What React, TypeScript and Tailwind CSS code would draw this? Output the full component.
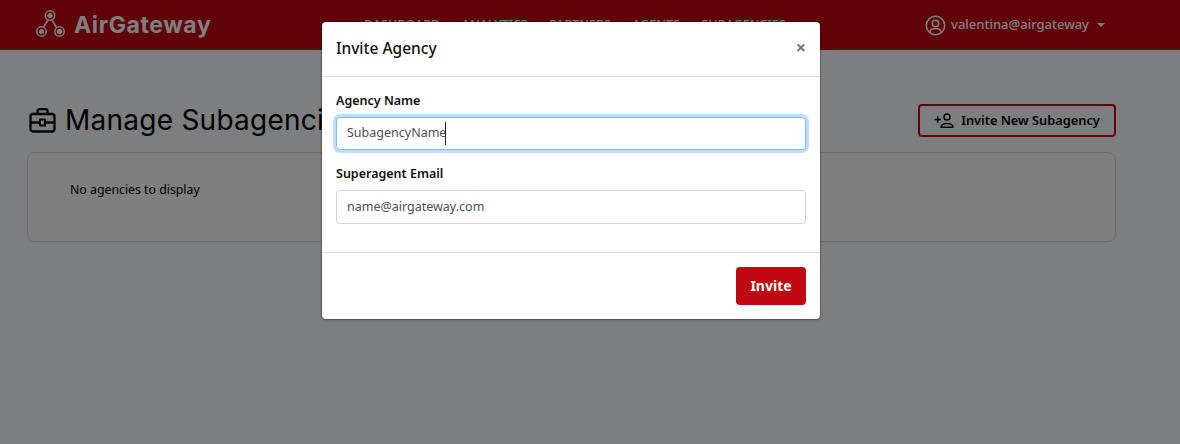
const navItems = ['DASHBOARD', 'ANALYTICS', 'PARTNERS', 'AGENTS', 'SUBAGENCIES'];

function LogoIcon() {
  return (
    <svg width="30" height="30" viewBox="0 0 30 30" fill="none" stroke="currentColor" strokeWidth="1.5">
      <circle cx="14" cy="5.500" r="4.700" />
      <circle cx="14" cy="5.500" r="2.500" fill="currentColor" stroke="none" />
      <circle cx="5.500" cy="21.500" r="4.700" />
      <circle cx="5.500" cy="21.500" r="2.500" fill="currentColor" stroke="none" />
      <circle cx="23.500" cy="21.500" r="4.700" />
      <circle cx="23.500" cy="21.500" r="2.800" fill="currentColor" stroke="none" />
      <path d="M12 10 L7.500 17.200 M16 10 L20.500 17.500" />
    </svg>
  );
}

function BriefcaseIcon() {
  return (
    <svg width="27" height="25" viewBox="0 0 27 25" fill="none" stroke="#0a0a0a" strokeWidth="2.300" strokeLinejoin="round">
      <rect x="1.500" y="6" width="24" height="17.500" rx="2.500" />
      <path d="M8.500 6V3.200a2 2 0 0 1 2-2h6a2 2 0 0 1 2 2V6" />
      <path d="M1.500 14.500h9M16.500 14.500h9" />
      <rect x="11" y="11.500" width="5" height="6" strokeWidth="2" />
    </svg>
  );
}

function InvitePersonIcon() {
  return (
    <svg width="20" height="16" viewBox="0 0 20 16" fill="none" stroke="#0a0a0a" strokeWidth="1.500">
      <path d="M0.500 6.500h6.500M3.750 3.200v6.600" />
      <circle cx="13" cy="4" r="3" />
      <path d="M7 14.200c0-2.400 3-3.700 6-3.700s6 1.300 6 3.700z" strokeLinejoin="round" />
    </svg>
  );
}

function UserCircleIcon() {
  return (
    <svg width="21" height="21" viewBox="0 0 21 21" fill="none" stroke="currentColor" strokeWidth="1.600">
      <circle cx="10.500" cy="10.500" r="9.200" />
      <circle cx="10.500" cy="8.500" r="3.200" />
      <path d="M4.500 17.200c0.800-2.500 3.200-3.700 6-3.700s5.200 1.200 6 3.700" />
    </svg>
  );
}

export default function App() {
  return (
    <div className="relative h-[444px] w-[1180px] overflow-hidden bg-[#fbfdff] font-['Noto_Sans',sans-serif]">
      <header className="flex h-[50px] items-center bg-[#c00813] pl-[36px] pr-[75px] text-white">
        <div className="flex w-[328px] items-center gap-[8px]">
          <LogoIcon />
          <span className="font-['Inter',sans-serif] text-[23px] font-bold tracking-[0.6px]">AirGateway</span>
        </div>
        <nav className="flex gap-[21.500px] text-[12.500px] font-medium">
          {navItems.map((item) => (
            <span key={item}>{item}</span>
          ))}
        </nav>
        <div className="ml-auto flex items-center gap-[5px] text-[13px] font-medium">
          <UserCircleIcon />
          <span>valentina@airgateway</span>
          <span className="ml-[3px] h-0 w-0 border-x-[4px] border-t-[4px] border-x-transparent border-t-white" />
        </div>
      </header>

      <main className="px-[27px] pt-[46px]">
        <div className="flex h-[48px] w-[1089px] items-center justify-between">
          <h1 className="ml-[2px] flex items-center gap-[9px] font-['Inter',sans-serif] text-[28px] leading-none tracking-[0.25px] text-black">
            <BriefcaseIcon />
            Manage Subagencies
          </h1>
          <button className="flex h-[33px] w-[198px] items-center justify-center gap-[7px] rounded-[4px] border-2 border-[#c00813] pt-[1px] text-[12.800px] font-semibold text-black">
            <InvitePersonIcon />
            Invite New Subagency
          </button>
        </div>
        <section className="mt-[8px] h-[90px] w-[1089px] rounded-[8px] border border-[#d8dce6] bg-white pl-[42px] pt-[28px] text-[12.300px] text-black shadow-[0_1px_4px_rgba(0,0,0,0.03)]">
          No agencies to display
        </section>
      </main>

      <div className="absolute inset-0 bg-[#000000]/50" />

      <div className="absolute left-[322px] top-[22px] w-[498px] rounded-[4px] bg-white shadow-[0_0_0_1px_rgba(0,0,0,0.2),0_1px_3px_rgba(0,0,0,0.2)]">
        <div className="flex h-[55px] items-center justify-between border-b border-[#dee2e6] pl-[14px] pr-[14px]">
          <h2 className="pb-[1px] text-[15.500px] font-medium text-[#111]">Invite Agency</h2>
          <span className="pb-[4px] text-[18px] font-bold leading-none text-[#777]">×</span>
        </div>
        <div className="h-[176px] border-b border-[#dee2e6] px-[14px] pt-[14px]">
          <label className="block text-[12.500px] leading-[20px] font-semibold text-[#111]">Agency Name</label>
          <div className="relative mt-[6px]">
            <input
              readOnly
              value="SubagencyName"
              className="block h-[33px] w-[470px] rounded-[4px] border border-[#80bdff] bg-white px-[10px] pb-[2px] text-[12.500px] text-[#495057] shadow-[0_0_0_3px_rgba(128,189,255,0.5)] outline-none"
            />
            <span className="absolute left-[109px] top-[5px] h-[23px] w-px bg-[#222]" />
          </div>
          <label className="mt-[14px] block text-[12.500px] leading-[20px] font-semibold text-[#111]">Superagent Email</label>
          <input
            readOnly
            value="name@airgateway.com"
            className="mt-[6px] block h-[34px] w-[470px] rounded-[4px] border border-[#ced4da] bg-white px-[10px] pb-[2px] text-[12.500px] text-[#495057] outline-none"
          />
        </div>
        <div className="flex h-[66px] items-center justify-end pr-[14px]">
          <button className="h-[38px] w-[70px] rounded-[4px] bg-[#c00813] pb-[2px] text-[14px] font-bold text-white">Invite</button>
        </div>
      </div>
    </div>
  );
}
